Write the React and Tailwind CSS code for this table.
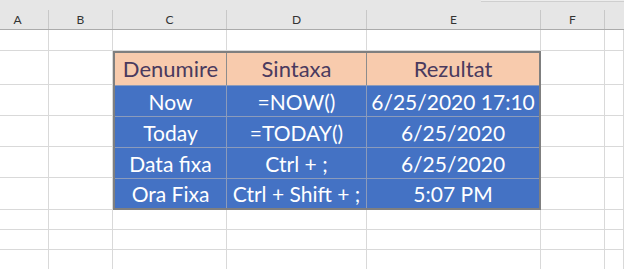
import React from 'react';

const cols = ['A', 'B', 'C', 'D', 'E', 'F', ''];
const widths = ['w-[49px]', 'w-[64px]', 'w-[114px]', 'w-[140px]', 'w-[174px]', 'w-[64px]', 'flex-1'];

const rows = [
  ['Now', '=NOW()', '6/25/2020 17:10'],
  ['Today', '=TODAY()', '6/25/2020'],
  ['Data fixa', 'Ctrl + ;', '6/25/2020'],
  ['Ora Fixa', 'Ctrl + Shift + ;', '5:07 PM'],
];

const Cell = () => <div className="border-r border-b border-[#d9d9d9]" />;

const App = () => {
  return (
    <div className="w-[624px] h-[269px] overflow-hidden bg-white font-['Lato','Liberation_Sans',sans-serif]">
      {/* column headers */}
      <div className="relative h-[30px] bg-[#e6e6e6] border-b border-[#ababab] flex">
        <div className="absolute top-0 left-[481px] right-0 h-[2px] border-b border-[#cfcfcf] bg-[#ededed]" />
        {cols.map((c, i) => (
          <div key={i} className={`${widths[i]} flex flex-col`}>
            <div className="h-[10px]" />
            <div
              className={`flex-1 flex items-center justify-center text-[12px] text-[#333] ${i < 6 ? 'border-r border-[#c8c8c8]' : ''} ${i === 0 ? 'pr-[13px]' : ''}`}
            >
              {c}
            </div>
          </div>
        ))}
      </div>

      {/* sheet body */}
      <div className="grid grid-cols-[49px_64px_114px_140px_174px_64px_1fr] grid-rows-[21px_34px_31px_31px_31px_32px_20px_20px_20px]">
        <div className="col-start-3 col-span-3 row-start-2 row-span-5 border-2 border-[#7f7f7f] grid grid-cols-[112px_140px_1fr] grid-rows-[32px_31px_31px_31px_1fr] text-[21px] leading-none">
          {['Denumire', 'Sintaxa', 'Rezultat'].map((h, i) => (
            <div
              key={h}
              className={`bg-[#f8cbad] text-[#4a3a5e] text-[22px] flex items-center justify-center ${i < 2 ? 'border-r border-[#8c8c8c]' : ''}`}
            >
              {h}
            </div>
          ))}
          {rows.map((r, ri) =>
            r.map((t, ci) => (
              <div
                key={`${ri}-${ci}`}
                className={`bg-[#4472c4] text-white flex items-center justify-center whitespace-nowrap ${ci < 2 ? 'border-r' : ''} border-t border-[#8b9bbb]`}
              >
                {t}
              </div>
            ))
          )}
        </div>
        {Array.from({ length: 63 - 15 }).map((_, i) => (
          <Cell key={i} />
        ))}
      </div>
    </div>
  );
};

export default App;
